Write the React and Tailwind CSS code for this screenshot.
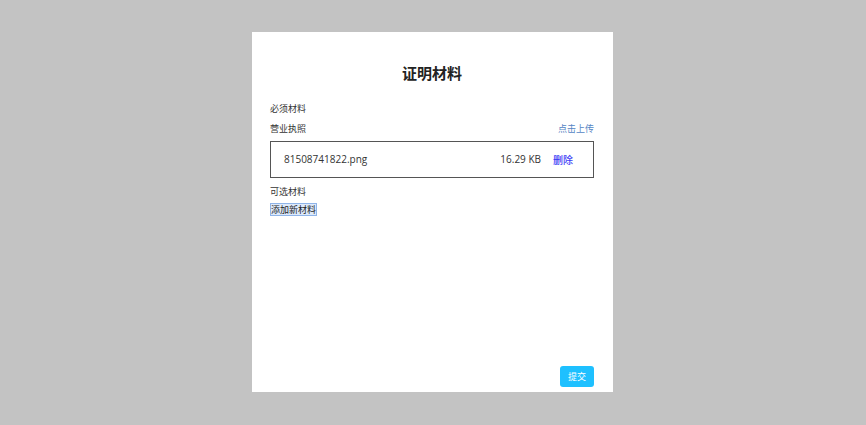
export default function App() {
  const cjk = { fontFamily: '"Noto Sans CJK SC", "Noto Sans", sans-serif' };
  return (
    <div className="flex h-[425px] w-full items-center justify-center bg-[#c3c3c3]" style={cjk}>
      <div className="mb-px mr-px flex h-[360px] w-[361px] flex-col bg-white pb-[5px] pl-[18px] pr-[19px] pt-[31px] text-[#333]">
        <h1 className="h-5 text-center text-[15px] font-bold leading-5 text-[#222]">证明材料</h1>

        <p className="mt-5 text-[9px] leading-[12px]">必须材料</p>

        <div className="mt-2 flex items-center justify-between text-[9px] leading-[12px]">
          <span>营业执照</span>
          <span className="text-[#5585c4]">点击上传</span>
        </div>

        <div className="mt-[6px] flex h-[37px] items-center border border-[#555] pl-[13px] pr-5 text-[10px]">
          <span className="flex-1 text-[#333]" style={{ fontFamily: '"Open Sans", sans-serif' }}>
            81508741822.png
          </span>
          <span className="text-[#333]" style={{ fontFamily: '"Open Sans", sans-serif' }}>16.29 KB</span>
          <button type="button" className="ml-3 text-[10px] font-medium text-[#3b3bf5]">删除</button>
        </div>

        <p className="mt-2 text-[9px] leading-[12px]">可选材料</p>

        <div className="mt-[5px] flex">
          <button
            type="button"
            className="h-[13px] border border-[#8fb4e8] bg-[#dce9fb] px-0 text-[9px] leading-[11px] text-[#222]"
          >
            添加新材料
          </button>
        </div>

        <div className="mt-auto flex justify-end">
          <button
            type="button"
            className="h-[21px] w-[34px] rounded-[3px] bg-[#1ec0ff] text-[9px] text-white"
          >
            提交
          </button>
        </div>
      </div>
    </div>
  );
}
